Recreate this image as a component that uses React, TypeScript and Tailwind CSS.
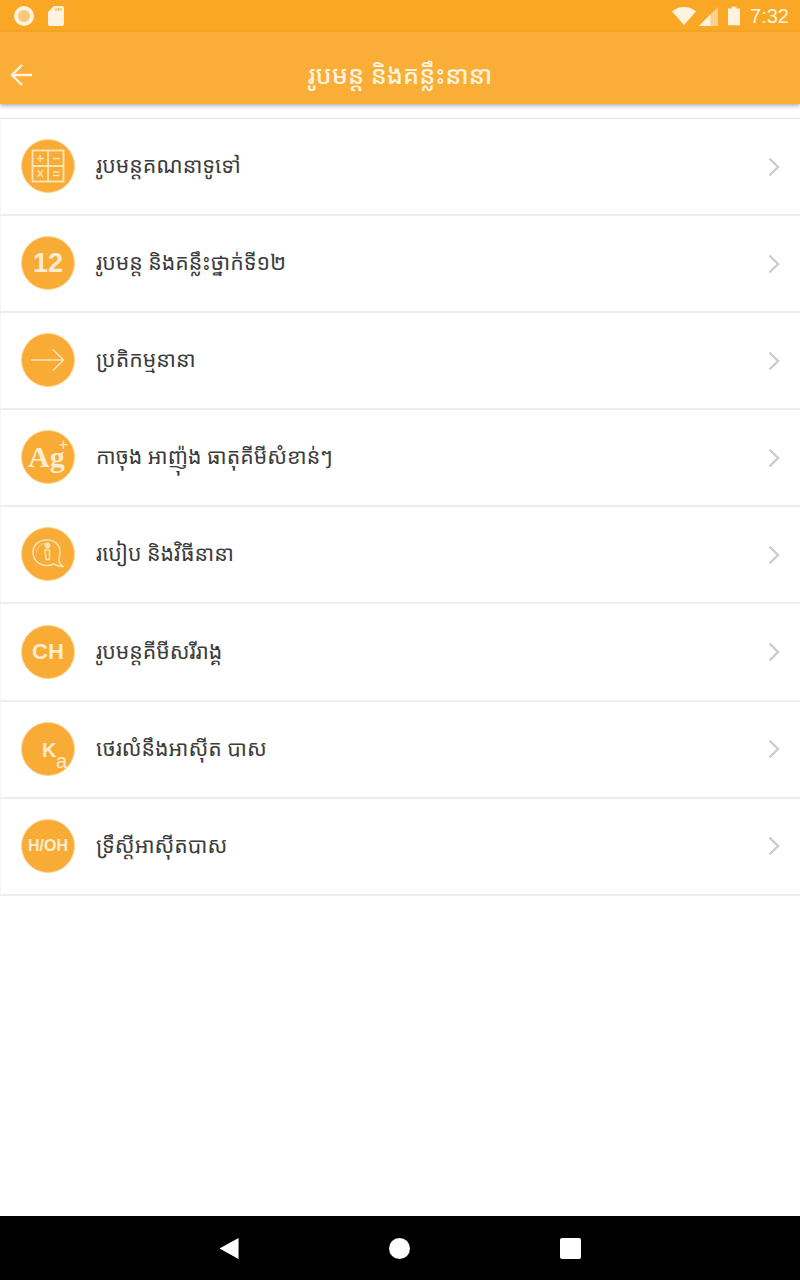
import React from 'react'

const khmer = { fontFamily: '"Noto Sans Khmer", "Khmer OS", "Noto Sans", "DejaVu Sans", sans-serif' }

const Badge: React.FC<{ children: React.ReactNode }> = ({ children }) => (
  <div className="relative w-[54px] h-[54px] shrink-0 -mt-[1px] rounded-full bg-[#f8ac36] border border-[#fcd48f] flex items-center justify-center text-[#fdeccf]">
    {children}
  </div>
)

const CalcIcon = () => (
  <svg width="34" height="34" viewBox="0 0 34 34" fill="none" stroke="#fce3b8" strokeWidth="1.8">
    <rect x="1.500" y="1.500" width="31" height="31" />
    <path d="M17 2v30M2 17h30" />
    <path d="M6 9.500h6.500M9.200 6v7M22 9.500h6.500M6.500 21l5.500 7M12 21l-5.500 7M22 23h6.500M22 26.500h6.500" strokeWidth="1.300" />
  </svg>
)

const ArrowIcon = () => (
  <svg width="34" height="24" viewBox="0 0 34 24" fill="none" stroke="#fce3b8" strokeWidth="1.600">
    <path d="M0 12h32M22 1.500L32.500 12 22 22.500" />
  </svg>
)

const InfoIcon = () => (
  <svg width="32" height="30" viewBox="0 0 32 30" fill="none" stroke="#fce3b8" strokeWidth="1.500">
    <path d="M15 1C23 1 28 6 28 13C28 17 27 19 27 21C27 24 29 26 31 27.500C27 27.500 24 26.500 22 25C20 26 18 26.500 15 26.500C7 26.500 1 21 1 13.500S7 1 15 1z" />
    <path d="M4.500 14C4.500 8.500 9 4.500 14 4.500" strokeWidth="1" opacity="0.7" />
    <circle cx="15.500" cy="6.500" r="2.200" fill="#fce3b8" />
    <path d="M13 11h4.500v9.500H14z" strokeWidth="1.500" />
  </svg>
)

const rows: { title: string; icon: React.ReactNode }[] = [
  { title: 'រូបមន្តគណនាទូទៅ', icon: <CalcIcon /> },
  { title: 'រូបមន្ត និងគន្លឹះថ្នាក់ទី១២', icon: <span className="text-[27px] font-bold font-['Liberation_Sans']">12</span> },
  { title: 'ប្រតិកម្មនានា', icon: <ArrowIcon /> },
  {
    title: 'កាចុង អាញ៉ុង ធាតុគីមីសំខាន់ៗ',
    icon: (
      <>
        <span className="absolute left-[6px] top-[11px] text-[30px] leading-none font-bold font-['Liberation_Serif']">Ag</span>
        <span className="absolute right-[6px] top-[6px] h-[15px] text-[16px] leading-none font-['Liberation_Sans']">+</span>
      </>
    ),
  },
  { title: 'របៀប និងវិធីនានា', icon: <InfoIcon /> },
  { title: 'រូបមន្តគីមីសរីរាង្គ', icon: <span className="text-[22px] font-bold font-['Liberation_Sans']">CH</span> },
  {
    title: 'ថេរលំនឹងអាស៊ីត បាស',
    icon: (
      <>
        <span className="absolute left-[20px] top-[17px] text-[20px] leading-none font-bold font-['Liberation_Sans']">K</span>
        <span className="absolute left-[34px] top-[28px] text-[20px] leading-none font-['Liberation_Sans']">a</span>
      </>
    ),
  },
  { title: 'ទ្រឹស្តីអាស៊ីតបាស', icon: <span className="text-[16px] font-bold font-['Liberation_Sans']">H/OH</span> },
]

export default function App() {
  return (
    <div className="w-[800px] h-[1280px] bg-white flex flex-col overflow-hidden font-['Liberation_Sans']">
      {/* status bar */}
      <div className="h-8 bg-[#faa726] flex items-center pl-[14px] pr-[11px] text-[#fdf3df] shrink-0">
        <div className="w-[20px] h-[20px] rounded-full border-[4px] border-[#fdf3df] bg-[#fbc77a]" />
        <svg className="ml-[14px]" width="16" height="20" viewBox="0 0 16 20" fill="#fdf3df">
          <path d="M6 0h8a2 2 0 0 1 2 2v16a2 2 0 0 1-2 2H2a2 2 0 0 1-2-2V6z" />
          <path d="M8 2v3M10.500 2v3M13 2v3" stroke="#faa726" strokeWidth="1" />
        </svg>
        <div className="ml-auto flex items-center">
          <svg width="24" height="18" viewBox="0 0 24 18" fill="#fdf3df">
            <path d="M0 4.500C3 1.800 7 0 12 0s9 1.800 12 4.500L12 18z" />
          </svg>
          <svg className="ml-[3px]" width="19" height="19" viewBox="0 0 20 20">
            <path d="M20 0v20H0z" fill="#fcd08d" />
            <path d="M12 8v12H0z" fill="#fdf3df" />
          </svg>
          <svg className="ml-[10px]" width="12" height="20" viewBox="0 0 13 20" fill="#fdf3df">
            <path d="M4 0h5v2h4v18H0V2h4z" />
          </svg>
          <span className="ml-[10px] text-[20px] leading-none">7:32</span>
        </div>
      </div>

      {/* app bar */}
      <div className="relative z-10 h-[72px] pt-[14px] bg-[#faae37] shadow-[0_2px_4px_rgba(0,0,0,0.3)] flex items-center justify-center shrink-0">
        <svg className="absolute left-[10px] top-[31px]" width="24" height="24" viewBox="0 0 24 24" fill="none" stroke="#fdf3df" strokeWidth="2.400">
          <path d="M22 12H2M12 2L2 12l10 10" />
        </svg>
        <span className="text-[25px] text-[#fdf3df] font-medium" style={khmer}>រូបមន្ត និងគន្លឹះនានា</span>
      </div>

      {/* list */}
      <div className="mt-[14px] border-t border-[#e4e4e4] flex flex-col">
        {rows.map((row) => (
          <div key={row.title} className="h-[97.1px] border-b-2 border-[#eeeeee] border-l border-l-[#f4f4f4] flex items-center pl-[20px] pr-[20px]">
            <Badge>{row.icon}</Badge>
            <span className="ml-[21px] -mt-[3px] text-[21.3px] text-[#3c3c3c]" style={khmer}>{row.title}</span>
            <svg className="ml-auto" width="12" height="20" viewBox="0 0 12 20" fill="none" stroke="#cccccc" strokeWidth="2.400">
              <path d="M1.500 1.500L10 10l-8.500 8.500" />
            </svg>
          </div>
        ))}
      </div>

      {/* nav bar */}
      <div className="mt-auto h-16 bg-black shrink-0 flex items-center justify-center gap-[150px]">
        <svg width="20" height="21" viewBox="0 0 20 22" fill="#ffffff"><path d="M20 0v22L0 11z" /></svg>
        <div className="w-[21px] h-[21px] rounded-full bg-white" />
        <div className="w-[21px] h-[21px] rounded-[2px] bg-white" />
      </div>
    </div>
  )
}
